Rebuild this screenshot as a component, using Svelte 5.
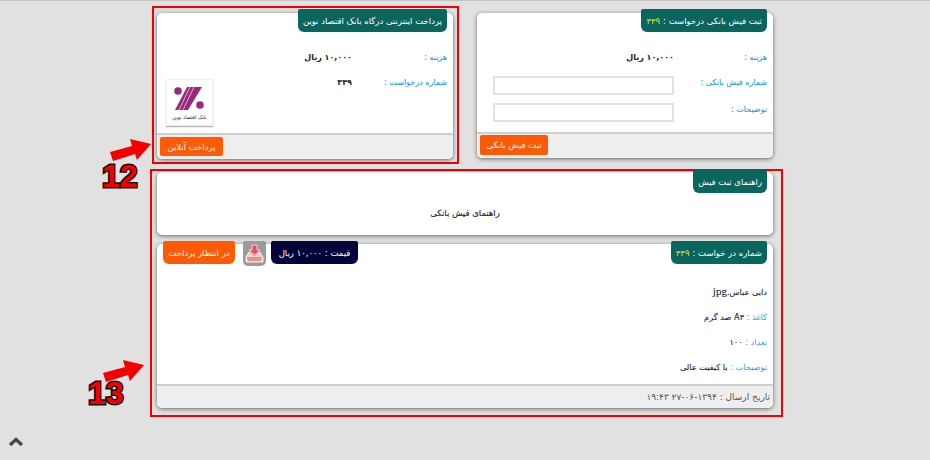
<script lang="ts">
  // request payment page: bank receipt form, online payment, guide and order summary
  const price = "۱۰,۰۰۰ ریال";
  const orderNo = "۳۳۹";
</script>

<div class="page" dir="rtl">
  <div class="top">
    <section class="card receipt">
      <header class="head">
        <h2 class="tab">ثبت فیش بانکی درخواست : <b>{orderNo}</b></h2>
      </header>
      <div class="body form">
        <span class="lbl">هزینه :</span><span class="val">{price}</span>
        <span class="lbl">شماره فیش بانکی :</span><input aria-label="شماره فیش بانکی" />
        <span class="lbl">توضیحات :</span><input aria-label="توضیحات" />
      </div>
      <footer class="foot"><button class="btn">ثبت فیش بانکی</button></footer>
    </section>

    <div class="mark mark-12">
      <section class="card online">
        <header class="head">
          <h2 class="tab">پرداخت اینترنتی درگاه بانک اقتصاد نوین</h2>
        </header>
        <div class="body pay">
          <span class="lbl r1">هزینه :</span><span class="val v1">{price}</span>
          <span class="lbl r2">شماره درخواست :</span><span class="val v2">{orderNo}</span>
          <div class="logo">
            <svg width="34" height="26" viewBox="0 0 34 26">
              <circle cx="5" cy="5" r="3.800" fill="#99287f" />
              <circle cx="27" cy="19" r="3.800" fill="#99287f" />
              <path d="M13 1 H28 L14 24 H1 Z" transform="translate(1 0)" fill="#99287f" />
              <path d="M21 1 L10 24 M17 1 L6 24" stroke="#e9cfe3" stroke-width=".8" />
            </svg>
            <small>بانک اقتصاد نوین</small>
          </div>
        </div>
        <footer class="foot"><button class="btn online-btn">پرداخت آنلاین</button></footer>
      </section>
    </div>
  </div>

  <div class="mark mark-13">
    <section class="card guide">
      <header class="head guide-head">
        <h2 class="tab">راهنمای ثبت فیش</h2>
      </header>
      <p class="guide-text">راهنمای فیش بانکی</p>
    </section>

    <section class="card order">
      <header class="head spread">
        <h2 class="tab">شماره در خواست : <b>{orderNo}</b></h2>
        <div class="badges">
          <span class="tab navy">قیمت : {price}</span>
          <span class="dl">
            <svg width="19" height="19" viewBox="0 0 19 19">
              <path d="M7 1 H12 V6 H15 L9.500 11 L4 6 H7 Z" fill="#e8505a" stroke="#fff" stroke-width=".7" />
              <path d="M4 8 L1 13 V18 H18 V13 L15 8 L9.500 13 Z" fill="#f6c9cb" stroke="#fff" stroke-width=".8" />
              <path d="M2 14 H17 M3 16 H16" stroke="#e8505a" stroke-width="1" />
            </svg>
          </span>
          <span class="tab orange">در انتظار پرداخت</span>
        </div>
      </header>
      <div class="details">
        <p>دایی عباس.<span class="ext">jpg</span></p>
        <p><span class="key">کاغذ :</span> A۳ صد گرم</p>
        <p><span class="key">تعداد :</span> ۱۰۰</p>
        <p><span class="key">توضیحات :</span> با کیفیت عالی</p>
      </div>
      <footer class="foot date">تاریخ ارسال : <span class="stamp" dir="ltr">۱۹:۴۳ ۲۷-۰۶-۱۳۹۴</span></footer>
    </section>
  </div>

  <!-- callouts drawn over the screenshot -->
  <svg class="arrow a12" width="44" height="24" viewBox="0 0 44 24"><path d="M2 14 L24 8 L22 1 L43 6 L29 22 L27 16 L5 23 Z" fill="#f40000" /></svg>
  <span class="num n12">12</span>
  <svg class="arrow a13" width="44" height="24" viewBox="0 0 44 24"><path d="M2 14 L24 8 L22 1 L43 6 L29 22 L27 16 L5 23 Z" fill="#f40000" /></svg>
  <span class="num n13">13</span>

  <svg class="up" width="16" height="11" viewBox="0 0 16 11"><path d="M2 9 L8 3.500 L14 9" fill="none" stroke="#4a4a4a" stroke-width="3.400" /></svg>
</div>

<style>
  :global(body) { margin: 0; background: #e1e1e1; }
  .page { position: relative; width: 930px; height: 460px; box-sizing: border-box; overflow: hidden; padding-top: 6px; font-family: "DejaVu Sans", "Noto Sans", sans-serif; font-size: 8.500px; color: #222233; background: #e1e1e1; border-top: 1px solid #c4c4c4; }

  .top { display: flex; align-items: flex-start; height: 157px; padding-right: 157px; }
  .mark { border: 2px solid #f40000; box-sizing: border-box; }
  .mark-12 { width: 307px; height: 158px; margin-right: 18px; margin-top: -1px; padding: 5px 4px 3px 3px; }
  .mark-13 { width: 633px; height: 248px; margin: 5px 147px 0 0; padding: 1px 8px 6px 5px; display: flex; flex-direction: column; gap: 9px; }

  .card { background: #fff; border-radius: 5px; box-shadow: 0 1px 4px rgba(0, 0, 0, .55); display: flex; flex-direction: column; }
  .receipt { width: 296px; height: 145px; margin-top: 6px; }
  .online { width: 296px; height: 146px; }
  .guide { height: 63px; }
  .order { height: 164px; }

  .head { display: flex; justify-content: flex-start; padding: 0 6px; margin-top: -4px; height: 23px; flex: none; }
  .guide-head { margin-top: -2px; }
  .spread { justify-content: space-between; margin-top: -3px; }
  .tab { margin: 0; height: 23px; box-sizing: border-box; padding: 0 5px; display: flex; align-items: center; gap: 3px; background: #0b655f; color: #fff; font-size: 8.500px; font-weight: 400; white-space: nowrap; border-radius: 2px 2px 6px 6px; }
  .tab b { color: #d8e31f; font-weight: 400; }
  .badges { display: flex; gap: 5px; }
  .navy { background: #04043a; width: 87px; justify-content: center; padding: 0; }
  .orange { background: #fd5a05; width: 72px; justify-content: center; padding: 0; }
  .dl { width: 23px; height: 25px; margin-left: 3px; background: #9b9b9b; border-radius: 2px 2px 5px 5px; display: flex; align-items: center; justify-content: center; }

  .body { flex: 1; display: grid; padding: 19px 6px 0; color: #222233; align-content: start; }
  .form { grid-template-columns: 93px 181px; grid-template-rows: 25px 27px 27px; }
  .pay { grid-template-columns: 95px 1fr; grid-template-rows: 25px 25px; }
  .r1, .v1 { grid-row: 1; }
  .r2, .v2 { grid-row: 2; }
  .r1, .r2 { grid-column: 1; }
  .v1, .v2 { grid-column: 2; }
  .lbl { color: #1f9ff0; font-size: 8px; line-height: 14px; white-space: nowrap; -webkit-text-stroke: .15px #1f9ff0; }
  .val { line-height: 14px; font-weight: 700; font-size: 8px; white-space: nowrap; }
  input { width: 181px; height: 19px; box-sizing: border-box; border: 2px solid #e2e2e2; background: #fff; margin: 0; padding: 0 4px; }

  .logo { grid-column: 2; grid-row: 2 / span 2; justify-self: end; margin: 3px 0 0 3px; width: 47px; height: 47px; box-sizing: border-box; background: #fff; border: 1px solid #f0f0f0; box-shadow: 0 1px 1px rgba(0, 0, 0, .3); display: flex; flex-direction: column; align-items: center; padding-top: 6px; gap: 2px; }
  .logo small { font-size: 5px; white-space: nowrap; color: #222; }

  .foot { flex: none; height: 26px; box-sizing: border-box; margin-top: auto; border-top: 2px solid #cfcfcf; background: #eee; border-radius: 0 0 5px 5px; display: flex; justify-content: flex-end; align-items: flex-start; padding: 1px 3px 0; }
  .btn { width: 68px; height: 20px; border: 0; padding: 0; border-radius: 2px; background: #fd5a05; color: #fff; font: 8.500px "DejaVu Sans", sans-serif; }
  .online-btn { width: 63px; height: 19px; margin-top: 1px; }

  .guide-text { margin: 12px 0 0; text-align: center; font-size: 8.500px; line-height: 16px; -webkit-text-stroke: .15px #222233; }

  .details { flex: 1; padding: 20px 6px 0; font-size: 8.200px; }
  .details p { margin: 0 0 9px; line-height: 16px; color: #222233; -webkit-text-stroke: .1px #222233; }
  .ext { font: 11px "Liberation Serif", serif; }
  .key { color: #1f9ff0; -webkit-text-stroke: 0; }
  .date { height: 24px; justify-content: flex-start; align-items: center; padding: 0 3px; color: #555; white-space: pre; font-size: 9px; }
  .stamp { letter-spacing: .4px; }

  .arrow { position: absolute; }
  .a12 { left: 108px; top: 137px; }
  .a13 { left: 101px; top: 358px; }
  .num { position: absolute; direction: ltr; font: 700 32px/1 "Liberation Sans", sans-serif; color: #f40000; -webkit-text-stroke: 3px #111; paint-order: stroke fill; }
  .n12 { left: 102px; top: 159px; }
  .n13 { left: 88px; top: 376px; }
  .up { position: absolute; left: 8px; top: 435px; }
</style>
